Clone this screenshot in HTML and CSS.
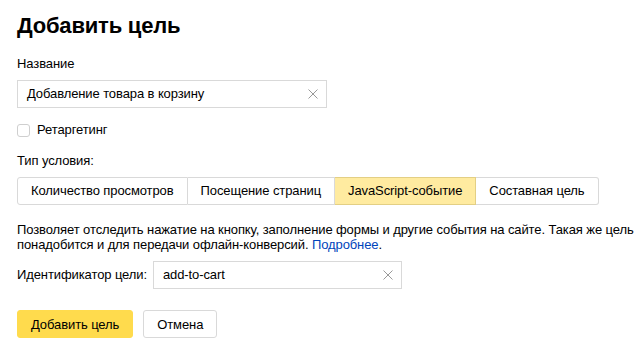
FILE: index.html
```html
<!DOCTYPE html>
<html lang="ru">
<head>
    <meta charset="UTF-8">
    <title>Добавить цель</title>
    <link rel="stylesheet" href="styles.css">
</head>
<body>
    <h1 class="title">Добавить цель</h1>

    <div class="field-label">Название</div>
    <div class="input input-name">
        <span class="input-text">Добавление товара в корзину</span>
        <svg class="clear" width="10" height="10" viewBox="0 0 10 10"><path d="M0.5 0.5 L9.5 9.5 M9.5 0.5 L0.5 9.5" stroke="#999" stroke-width="1" fill="none"/></svg>
    </div>

    <label class="checkbox">
        <span class="checkbox-box"></span>
        <span>Ретаргетинг</span>
    </label>

    <div class="field-label type-label">Тип условия:</div>
    <div class="tabs">
        <div class="tab">Количество просмотров</div>
        <div class="tab">Посещение страниц</div>
        <div class="tab tab-active">JavaScript-событие</div>
        <div class="tab">Составная цель</div>
    </div>

    <p class="hint">Позволяет отследить нажатие на кнопку, заполнение формы и другие события на сайте. Такая же цель понадобится и для передачи офлайн-конверсий. <a href="#" class="link">Подробнее</a>.</p>

    <div class="id-row">
        <span class="id-label">Идентификатор цели:</span>
        <div class="input input-id">
            <span class="input-text">add-to-cart</span>
            <svg class="clear" width="10" height="10" viewBox="0 0 10 10"><path d="M0.5 0.5 L9.5 9.5 M9.5 0.5 L0.5 9.5" stroke="#999" stroke-width="1" fill="none"/></svg>
        </div>
    </div>

    <div class="actions">
        <button class="btn btn-primary">Добавить цель</button>
        <button class="btn">Отмена</button>
    </div>
</body>
</html>
```
FILE: styles.css
```css
body {
    font-family: "Liberation Sans", Arial, sans-serif;
    font-size: 13px;
    line-height: 16px;
    letter-spacing: -0.1px;
    color: #000;
    background: #fff;
    margin: 0;
    padding: 12px 17px 0;
}
.title {
    font-size: 22px;
    line-height: 28px;
    font-weight: bold;
    letter-spacing: -0.2px;
    margin: 0 0 16px;
}
.field-label {
    margin-bottom: 8px;
}
.input {
    box-sizing: border-box;
    height: 28px;
    border: 1px solid #d9d9d9;
    display: flex;
    align-items: center;
    justify-content: space-between;
    padding: 0 8px 0 9px;
}
.input-name {
    width: 310px;
}
.input-id {
    width: 249px;
}
.clear {
    flex-shrink: 0;
}
.checkbox {
    display: flex;
    align-items: center;
    gap: 7px;
    margin-top: 14px;
}
.checkbox-box {
    box-sizing: border-box;
    width: 13px;
    height: 13px;
    border: 1px solid #cfcfcf;
    border-radius: 3px;
}
.type-label {
    margin-top: 15px;
}
.tabs {
    display: flex;
}
.tab {
    box-sizing: border-box;
    height: 28px;
    line-height: 26px;
    padding: 0 13px;
    border: 1px solid #d9d9d9;
    border-left: none;
}
.tab:first-child {
    border-left: 1px solid #d9d9d9;
    border-radius: 3px 0 0 3px;
}
.tab:last-child {
    border-radius: 0 3px 3px 0;
}
.tab-active {
    background: #ffeba0;
    border-color: #e3cf84;
}
.hint {
    margin: 17px 0 0;
    width: 624px;
    line-height: 15px;
}
.link {
    color: #04b;
    text-decoration: none;
}
.id-row {
    display: flex;
    align-items: center;
    gap: 6px;
    margin-top: 9px;
}
.actions {
    display: flex;
    gap: 10px;
    margin-top: 21px;
}
.btn {
    font-family: inherit;
    font-size: 13px;
    letter-spacing: -0.1px;
    height: 28px;
    padding: 0 13px;
    background: #fff;
    border: 1px solid #d9d9d9;
    border-radius: 3px;
    color: #000;
}
.btn-primary {
    background: #ffdb4d;
    border-color: #ffdb4d;
}
```
